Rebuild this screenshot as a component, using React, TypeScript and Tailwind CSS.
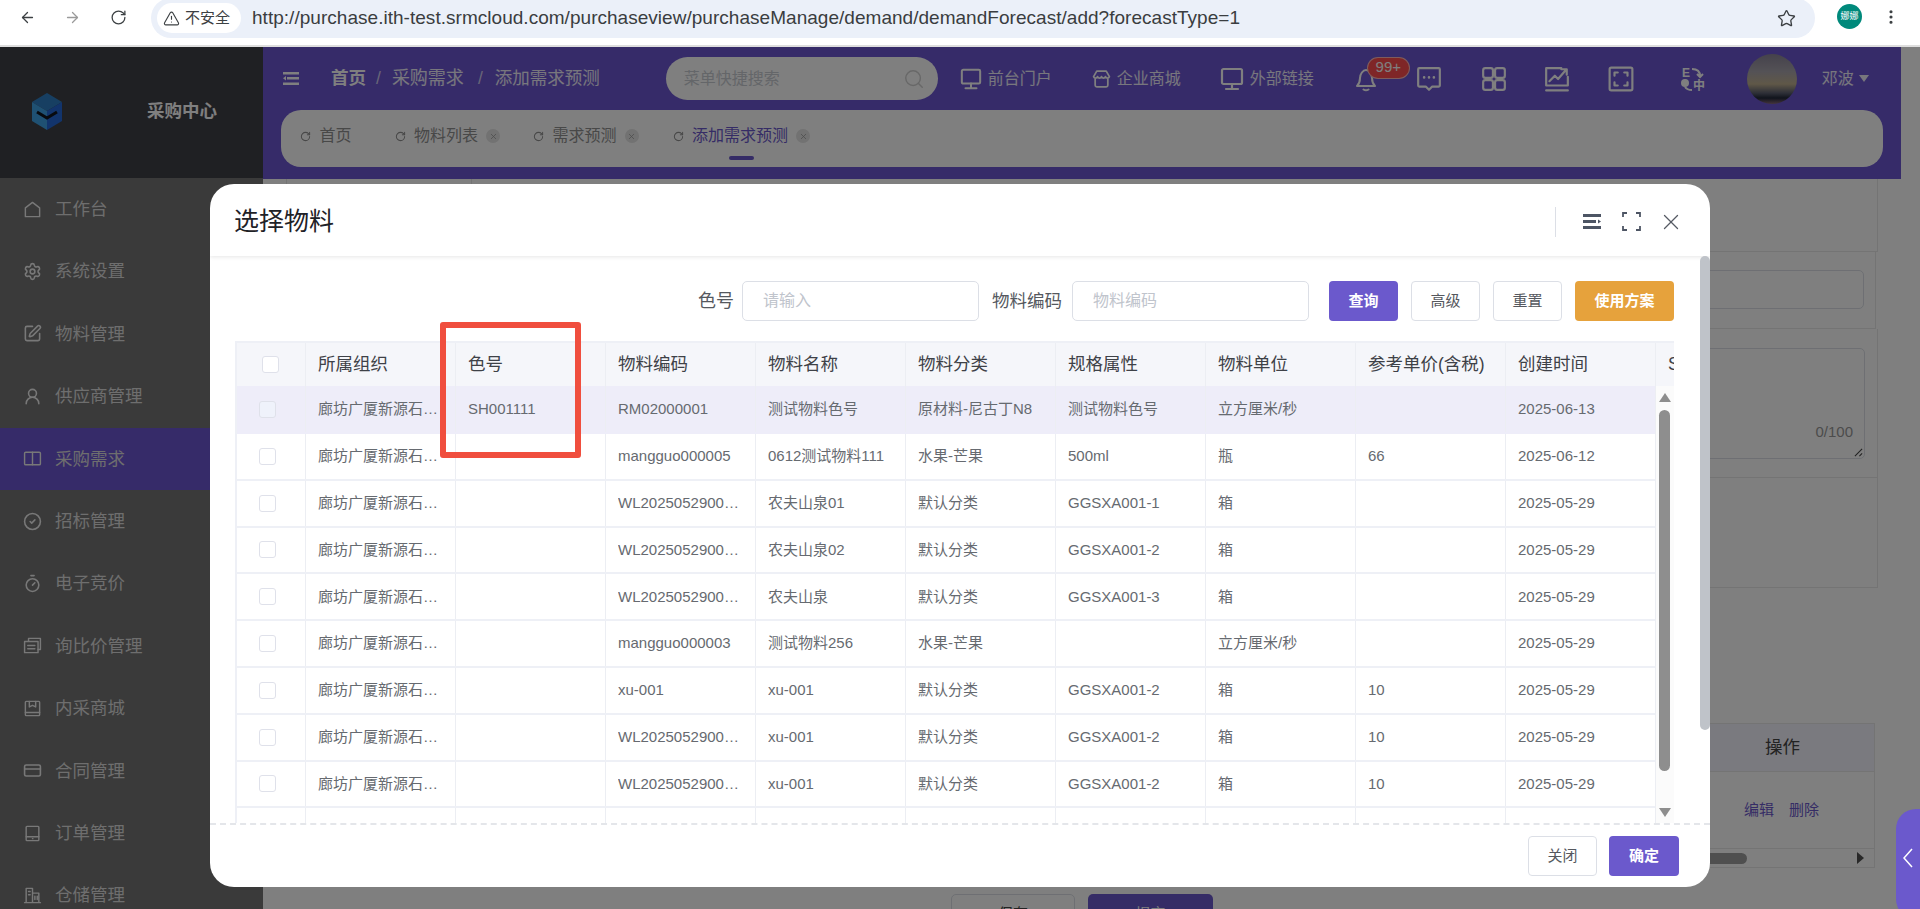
import React from "react";
import {
  ArrowLeft,
  ArrowRight,
  CircleCheck,
  CreditCard,
  EllipsisVertical,
  RotateCw,
  Search,
  Settings,
  SquarePen,
  Star,
  Timer,
  TriangleAlert,
  UserRound,
  X,
} from "lucide-react";

type IconProps = { className?: string };

const Svg = ({ className, children, vb = "0 0 24 24", sw = 1.8 }: IconProps & { children: React.ReactNode; vb?: string; sw?: number }) => (
  <svg viewBox={vb} fill="none" stroke="currentColor" strokeWidth={sw} strokeLinecap="round" strokeLinejoin="round" className={className}>
    {children}
  </svg>
);

const HomeIcon = (p: IconProps) => (
  <Svg {...p}>
    <path d="M3 21V10l9-7 9 7v11z" />
  </Svg>
);
const BookIcon = (p: IconProps) => (
  <Svg {...p}>
    <rect x="2" y="4" width="20" height="16" rx="1.500" />
    <path d="M12 4v16" />
  </Svg>
);
const CardsIcon = (p: IconProps) => (
  <Svg {...p}>
    <path d="M7 6V3h15v14h-3" />
    <rect x="2" y="7" width="17" height="14" />
    <path d="M6 12h9M6 16h9" />
  </Svg>
);
const ShopIcon = (p: IconProps) => (
  <Svg {...p}>
    <rect x="3" y="3" width="18" height="18" rx="1" />
    <path d="M8 3v7l4-2 4 2V3M3 17h18" />
  </Svg>
);
const TabletIcon = (p: IconProps) => (
  <Svg {...p}>
    <rect x="4" y="3" width="16" height="18" rx="1" />
    <path d="M4 16h16" />
    <path d="M12 18.500h.5" />
  </Svg>
);
const StoreIcon = (p: IconProps) => (
  <Svg {...p}>
    <path d="M2 21h20M4 21V3h8v18M12 9h8v12M7 7h2M7 11h2M15 13v4M18 13v4" />
  </Svg>
);
const MonitorIcon = (p: IconProps) => (
  <Svg {...p} sw={2.2}>
    <rect x="2" y="2" width="20" height="15" rx="1.500" />
    <path d="M12 17v5M6 22h12" />
  </Svg>
);
const ShopFrontIcon = (p: IconProps) => (
  <Svg {...p} sw={2.2}>
    <path d="M6 2h12l4 7c-1 2.500-4 2.500-5 0-1 2.500-4 2.500-5 0-1 2.500-4 2.500-5 0-1 2.500-4 2.500-5 0z" />
    <path d="M4 12v8a2 2 0 0 0 2 2h12a2 2 0 0 0 2-2v-8" />
  </Svg>
);
const BellIcon = (p: IconProps) => (
  <Svg {...p} sw={2}>
    <path d="M3 19c2-2 3-4 3-8s3-8 6-8 6 4 6 8 1 6 3 8z" />
    <path d="M9.500 22.500c1.500 1 3.500 1 5 0" />
  </Svg>
);
const MessageIcon = (p: IconProps) => (
  <Svg {...p} sw={2}>
    <path d="M3 2h18a1 1 0 0 1 1 1v15a1 1 0 0 1-1 1h-6l-3 3-3-3H3a1 1 0 0 1-1-1V3a1 1 0 0 1 1-1z" />
    <path d="M7.500 10.500h.01M12 10.500h.01M16.500 10.500h.01" strokeWidth={2.400} />
  </Svg>
);
const GridIcon = (p: IconProps) => (
  <Svg {...p} sw={2}>
    <rect x="2" y="2" width="9" height="9" rx="2" />
    <rect x="13" y="2" width="9" height="9" rx="2" />
    <rect x="2" y="13" width="9" height="9" rx="2" />
    <rect x="13" y="13" width="9" height="9" rx="2" />
  </Svg>
);
const ChartIcon = (p: IconProps) => (
  <Svg {...p} sw={2}>
    <path d="M16 2H2v16h20V10M2 22.500h20" />
    <path d="M5 14l5-5 3 3 7-8M16 3h5v5" />
  </Svg>
);
const FrameIcon = (p: IconProps) => (
  <Svg {...p} sw={2}>
    <rect x="1.500" y="1.500" width="21" height="21" rx="1.500" />
    <path d="M9 6H6v3M15 6h3v3M9 18H6v-3M15 18h3v-3" />
  </Svg>
);
const TranslateIcon = (p: IconProps) => (
  <svg viewBox="0 0 26 26" className={p.className} fill="none" stroke="currentColor" strokeWidth="2">
    <text x="2" y="11" fontSize="12" fontWeight="700" fill="currentColor" stroke="none" fontFamily="Liberation Sans">E</text>
    <text x="13" y="24" fontSize="12" fontWeight="700" fill="currentColor" stroke="none" fontFamily="Noto Sans CJK SC">中</text>
    <path d="M12 3c5 0 8 2 8 7M17 8l3 3 3-3" />
    <circle cx="5" cy="17" r="4" fill="currentColor" stroke="none" />
    <path d="M5 21c2 3 5 3 7 3" />
  </svg>
);
const MenuIcon = (p: IconProps) => (
  <svg viewBox="0 0 16 13" className={p.className} fill="currentColor">
    <rect x="0" y="0" width="16" height="2.500" />
    <rect x="4" y="5" width="12" height="2.500" />
    <rect x="0" y="10.500" width="16" height="2.500" />
    <path d="M0 6.200l3-2.200v4.400z" />
  </svg>
);

const Logo = () => (
  <svg viewBox="0 0 32 37" className="h-[37px] w-[32px]">
    <path d="M16 0l15 9-15 9L1 9z" fill="#2f7fc4" />
    <path d="M1 9l15 9v19L1 28z" fill="#3fa2e6" />
    <path d="M31 9L16 18v19l15-9z" fill="#2468d8" />
    <path d="M6 19l10 6 10-6" fill="none" stroke="#10141c" strokeWidth="3" />
  </svg>
);

const Avatar = () => (
  <svg viewBox="0 0 50 50" className="h-[50px] w-[50px] rounded-full">
    <defs>
      <linearGradient id="sky" x1="0" y1="0" x2="0" y2="1">
        <stop offset="0" stopColor="#8a8498" />
        <stop offset="0.35" stopColor="#a8a4ac" />
        <stop offset="0.6" stopColor="#c0b090" />
        <stop offset="0.78" stopColor="#5c6070" />
        <stop offset="0.88" stopColor="#202838" />
        <stop offset="1" stopColor="#8a6a7a" />
      </linearGradient>
    </defs>
    <rect width="50" height="50" fill="url(#sky)" />
  </svg>
);

const sideItems: { label: string; icon: React.ComponentType<IconProps>; active?: boolean }[] = [
  { label: "工作台", icon: HomeIcon },
  { label: "系统设置", icon: Settings },
  { label: "物料管理", icon: SquarePen },
  { label: "供应商管理", icon: UserRound },
  { label: "采购需求", icon: BookIcon, active: true },
  { label: "招标管理", icon: CircleCheck },
  { label: "电子竞价", icon: Timer },
  { label: "询比价管理", icon: CardsIcon },
  { label: "内采商城", icon: ShopIcon },
  { label: "合同管理", icon: CreditCard },
  { label: "订单管理", icon: TabletIcon },
  { label: "仓储管理", icon: StoreIcon },
];

const columns = ["所属组织", "色号", "物料编码", "物料名称", "物料分类", "规格属性", "物料单位", "参考单价(含税)", "创建时间", "SPU"];

const org = "廊坊广厦新源石材有限公司";
const wl = "WL20250529000001";
const rows = [
  [org, "SH001111", "RM02000001", "测试物料色号", "原材料-尼古丁N8", "测试物料色号", "立方厘米/秒", "", "2025-06-13"],
  [org, "", "mangguo000005", "0612测试物料111", "水果-芒果", "500ml", "瓶", "66", "2025-06-12"],
  [org, "", wl, "农夫山泉01", "默认分类", "GGSXA001-1", "箱", "", "2025-05-29"],
  [org, "", wl, "农夫山泉02", "默认分类", "GGSXA001-2", "箱", "", "2025-05-29"],
  [org, "", wl, "农夫山泉", "默认分类", "GGSXA001-3", "箱", "", "2025-05-29"],
  [org, "", "mangguo000003", "测试物料256", "水果-芒果", "", "立方厘米/秒", "", "2025-05-29"],
  [org, "", "xu-001", "xu-001", "默认分类", "GGSXA001-2", "箱", "10", "2025-05-29"],
  [org, "", wl, "xu-001", "默认分类", "GGSXA001-2", "箱", "10", "2025-05-29"],
  [org, "", wl, "xu-001", "默认分类", "GGSXA001-2", "箱", "10", "2025-05-29"],
  ["", "", "", "", "", "", "", "", ""],
];

const BrowserBar = () => (
  <div className="flex h-[47px] shrink-0 items-start border-b-2 border-[#dedede] bg-white text-[#3c4043]">
    <ArrowLeft className="ml-[19px] mt-[9px] h-[17px] w-[17px]" strokeWidth={1.8} />
    <ArrowRight className="ml-[28px] mt-[9px] h-[17px] w-[17px] text-[#9a9a9a]" strokeWidth={1.8} />
    <RotateCw className="ml-[29px] mt-[9px] h-[17px] w-[17px]" strokeWidth={1.8} />
    <div className="ml-[24px] -mt-[2px] flex h-[40px] w-[1664px] items-center rounded-full bg-[#ebf0f9] pl-[6px] pr-[19px]">
      <div className="flex h-[30px] w-[84px] items-center gap-[5px] rounded-full bg-white pl-[6px] text-[15px]">
        <TriangleAlert className="h-[17px] w-[17px]" strokeWidth={1.6} />
        <span>不安全</span>
      </div>
      <span className="ml-[11px] flex-1 text-[19px] tracking-[0.03px] text-[#3a3d40]">
        http://purchase.ith-test.srmcloud.com/purchaseview/purchaseManage/demand/demandForecast/add?forecastType=1
      </span>
      <Star className="h-[19px] w-[19px]" strokeWidth={1.7} />
    </div>
    <div className="ml-[22px] mt-[4px] flex h-[25px] w-[25px] items-center justify-center rounded-full bg-[#00897b] text-[9px] text-white">娜娜</div>
    <EllipsisVertical className="ml-[20px] mt-[8px] h-[18px] w-[18px]" strokeWidth={2.2} />
  </div>
);

const Sidebar = () => (
  <div className="flex w-[263px] shrink-0 flex-col bg-[#747474]">
    <div className="flex h-[131px] shrink-0 items-center bg-[#3e4046] pb-[2px] pl-[31px]">
      <Logo />
      <span className="ml-[84px] text-[17.500px] font-bold text-[#ffffff]">采购中心</span>
    </div>
    {sideItems.map((item) => {
      const Icon = item.icon;
      return (
        <div key={item.label} className={`flex h-[62.400px] shrink-0 items-center pl-[23px] text-[17.500px] text-[#dcdcdc] ${item.active ? "bg-[#6c56d2]" : ""}`}>
          <Icon className="h-[19px] w-[19px] text-[#f0f0f0]" />
          <span className="ml-[13px]">{item.label}</span>
        </div>
      );
    })}
  </div>
);

const Tab = ({ label, active, closable, className }: { label: string; active?: boolean; closable?: boolean; className?: string }) => (
  <div className={`relative flex h-full items-center pb-[5px] ${className ?? ""}`}>
    <RotateCw className="h-[11px] w-[11px] text-[#909090]" strokeWidth={2.2} />
    <span className={`ml-[8.500px] text-[16px] ${active ? "text-[#6b59cc]" : "text-[#909090]"}`}>{label}</span>
    {closable && (
      <span className="ml-[8px] flex h-[14px] w-[14px] items-center justify-center rounded-full bg-[#e4e4e4]">
        <X className="h-[9px] w-[9px] text-[#999999]" strokeWidth={2} />
      </span>
    )}
    {active && <span className="absolute left-[56px] top-[46px] h-[4px] w-[25px] rounded-full bg-[#6b59cc]" />}
  </div>
);

const HeaderLink = ({ icon: Icon, label, size, className }: { icon: React.ComponentType<IconProps>; label: string; size: string; className?: string }) => (
  <div className={`flex items-center gap-[6px] text-[16px] text-white/90 ${className ?? ""}`}>
    <Icon className={`${size} text-white`} />
    <span>{label}</span>
  </div>
);

const TopHeader = () => (
  <div className="flex h-[132px] shrink-0 flex-col bg-[#6c56d2]">
    <div className="flex h-[63px] shrink-0 items-center pl-[20px] text-white">
      <MenuIcon className="h-[13px] w-[16px]" />
      <span className="ml-[32px] text-[17.500px] font-bold">首页</span>
      <span className="ml-[10px] text-[17.500px] text-white/70">/</span>
      <span className="ml-[11px] text-[18px] text-white/90">采购需求</span>
      <span className="ml-[14px] text-[17.500px] text-white/70">/</span>
      <span className="ml-[12px] text-[17.500px] text-white/90">添加需求预测</span>
      <div className="ml-[66px] flex h-[43px] w-[272px] shrink-0 items-center justify-between rounded-full bg-white pl-[18px] pr-[13px] text-[16px] text-[#c8ccd2]">
        <span>菜单快捷搜索</span>
        <Search className="h-[22px] w-[22px] text-[#d0d0d0]" strokeWidth={1.6} />
      </div>
      <HeaderLink icon={MonitorIcon} label="前台门户" size="h-[22px] w-[22px]" className="ml-[22px]" />
      <HeaderLink icon={ShopFrontIcon} label="企业商城" size="h-[22px] w-[19px]" className="ml-[40px]" />
      <HeaderLink icon={MonitorIcon} label="外部链接" size="h-[24px] w-[24px]" className="ml-[39px]" />
      <div className="relative ml-[40px] h-[26px] w-[24px]">
        <BellIcon className="h-[26px] w-[24px]" />
        <span className="absolute -top-[9px] left-[13px] flex h-[22px] w-[43px] items-center justify-center rounded-full border border-white/60 bg-[#ff4d4f] text-[15px]">99+</span>
      </div>
      <MessageIcon className="ml-[38px] h-[26px] w-[26px]" />
      <GridIcon className="ml-[39px] h-[26px] w-[26px]" />
      <ChartIcon className="ml-[37px] h-[26px] w-[26px]" />
      <FrameIcon className="ml-[38px] h-[26px] w-[26px]" />
      <TranslateIcon className="ml-[46px] h-[26px] w-[26px]" />
      <div className="ml-[41px] shrink-0">
        <Avatar />
      </div>
      <span className="ml-[25px] text-[16px] text-white/90">邓波</span>
      <span className="ml-[5px] h-0 w-0 border-x-[5px] border-t-[7px] border-x-transparent border-t-white/90" />
    </div>
    <div className="mx-[18px] flex h-[57px] shrink-0 items-center rounded-[20px] bg-white pl-[19px]">
      <Tab label="首页" className="mr-[10px]" />
      <Tab label="物料列表" closable className="ml-[33px]" />
      <Tab label="需求预测" closable className="ml-[33px]" />
      <Tab label="添加需求预测" closable active className="ml-[34px]" />
    </div>
  </div>
);

const FormRow = ({ h, w, children }: { h: string; w: string; children?: React.ReactNode }) => (
  <div className={`flex ${h} ${w} shrink-0 border-b border-r border-l border-[#e8e8e8]`}>
    <div className="w-[185px] shrink-0 border-r border-[#e8e8e8]" />
    <div className="relative flex-1">{children}</div>
  </div>
);

const PageBehind = () => (
  <div className="flex-1 pl-[23px]">
    <FormRow h="h-[73px]" w="w-[1592px]" />
    <FormRow h="h-[77px]" w="w-[1590px]">
      <div className="ml-[20px] mr-[11px] mt-[18px] h-[39px] rounded-[5px] border border-[#dcdfe6]" />
    </FormRow>
    <FormRow h="h-[149px]" w="w-[1592px]">
      <div className="relative ml-[20px] mr-[12px] mt-[19px] h-[111px] rounded-[5px] border border-[#dcdfe6]">
        <span className="absolute bottom-[15px] right-[11px] text-[15px] text-[#999999]">0/100</span>
        <svg viewBox="0 0 10 10" className="absolute bottom-[1px] right-[1px] h-[9px] w-[9px]" stroke="#444444" strokeWidth="1.200">
          <path d="M1 9l8-8M6 9l3-3" />
        </svg>
      </div>
    </FormRow>
    <FormRow h="h-[110px]" w="w-[1592px]" />
    <div className="mt-[135px] flex h-[145px] w-[1589px] flex-col border border-[#e8e8e8]">
      <div className="flex h-[47px] shrink-0 items-center justify-end bg-[#f4f4fe]">
        <span className="w-[165px] pl-[56px] text-[17.500px] text-[#444444]">操作</span>
      </div>
      <div className="flex h-[78px] shrink-0 items-center justify-end border-y border-[#e8e8e8] pr-[55px] text-[15px] text-[#6b59cc]">
        <span>编辑</span>
        <span className="ml-[15px]">删除</span>
      </div>
      <div className="flex flex-1 items-center pl-[1380px]">
        <span className="h-[11px] w-[80px] rounded-full bg-[#9e9e9e]" />
        <span className="ml-[110px] h-0 w-0 border-y-[6px] border-l-[7px] border-y-transparent border-l-[#505050]" />
      </div>
    </div>
    <div className="mt-[26px] flex gap-[13px] pl-[665px] text-[15px]">
      <div className="flex h-[40px] w-[124px] items-center justify-center rounded-[5px] border border-[#dcdfe6] bg-white text-[#444444]">保存</div>
      <div className="flex h-[40px] w-[125px] items-center justify-center rounded-[5px] bg-[#6b59cc] text-white">提交</div>
    </div>
  </div>
);

const Btn = ({ children, className }: { children: React.ReactNode; className?: string }) => (
  <button className={`h-[40px] rounded-[4px] text-[15px] ${className ?? ""}`}>{children}</button>
);

const MaterialTable = () => (
  <div className="relative mt-[20px] h-[482px] overflow-hidden border-l-2 border-t-2 border-[#eef0f6]">
    <div className="flex h-[43px] w-[1600px] bg-[#f5f6fa] text-[17.500px] text-[#3e4147]">
      <div className="flex w-[68px] shrink-0 items-center pl-[25px]">
        <span className="h-[17px] w-[17px] rounded-[3px] border border-[#dfe1ea] bg-white" />
      </div>
      {columns.map((c) => (
        <div key={c} className="flex w-[150px] shrink-0 items-center whitespace-nowrap border-l border-[#eceef3] pl-[12px]">
          {c}
        </div>
      ))}
    </div>
    {rows.map((r, i) => (
      <div key={i} className={`flex w-[1600px] border-b-2 text-[15px] text-[#666a70] ${i === 0 ? "h-[48px] border-[#eeedf9] bg-[#eeedf9]" : "h-[46.800px] border-[#eef0f6]"}`}>
        <div className="flex w-[68px] shrink-0 items-center pl-[22px]">
          {r[0] && <span className={`h-[17px] w-[17px] rounded-[3px] border border-[#dfe1ea] ${i === 0 ? "bg-[#eff2fb]" : "bg-white"}`} />}
        </div>
        {r.map((v, j) => (
          <div key={j} className="flex w-[150px] shrink-0 items-center border-l border-[#eceef3] pl-[12px] pr-[13px]">
            <span className="truncate">{v}</span>
          </div>
        ))}
      </div>
    ))}
    <div className="absolute bottom-0 right-0 top-[43px] flex w-[19.500px] flex-col items-center border-l border-[#eceef3] bg-[#fbfbfb]">
      <span className="mt-[7px] h-0 w-0 border-x-[6px] border-b-[9px] border-x-transparent border-b-[#8e8e8e]" />
      <span className="mt-[8px] h-[361px] w-[11px] rounded-full bg-[#8e8e8e]" />
      <span className="mt-[37px] h-0 w-0 border-x-[6px] border-t-[9px] border-x-transparent border-t-[#8e8e8e]" />
    </div>
  </div>
);

const Modal = () => (
  <div className="absolute left-[210px] top-[184px] z-20 flex h-[703px] w-[1500px] flex-col overflow-hidden rounded-[24px] bg-white">
    <div className="flex h-[72px] shrink-0 items-center pl-[24px] pr-[26px] pt-[3px] shadow-[0_1px_4px_rgba(0,0,0,0.1)]">
      <span className="flex-1 text-[25px] text-[#1f2227]">选择物料</span>
      <span className="h-[30px] w-px bg-[#dcdfe6]" />
      <svg viewBox="0 0 18 15" className="ml-[27px] h-[15px] w-[18px]" fill="#4d5564">
        <rect width="18" height="3" />
        <rect y="6" width="13" height="3" />
        <rect y="12" width="18" height="3" />
        <path d="M15 5.500l3 2-3 2z" />
      </svg>
      <svg viewBox="0 0 19 19" className="ml-[21px] h-[19px] w-[19px]" fill="none" stroke="#4d5564" strokeWidth="1.800">
        <path d="M5 1H1v4M14 1h4v4M5 18H1v-4M14 18h4v-4" />
      </svg>
      <X className="ml-[17px] h-[26px] w-[26px] text-[#555a63]" strokeWidth={1.200} />
    </div>
    <div className="relative h-[567px] shrink-0 pl-[25px] pr-[36px] pt-[25px]">
      <div className="flex h-[40px] items-center justify-end text-[17.500px] text-[#55585e]">
        <span className="text-[18px]">色号</span>
        <input placeholder="请输入" className="ml-[8px] h-[40px] w-[237px] rounded-[5px] border border-[#dcdfe6] pl-[20px] text-[16px] outline-none placeholder:text-[#c0c4cc]" />
        <span className="ml-[13px]">物料编码</span>
        <input placeholder="物料编码" className="ml-[10px] h-[40px] w-[237px] rounded-[5px] border border-[#dcdfe6] pl-[20px] text-[16px] outline-none placeholder:text-[#c0c4cc]" />
        <Btn className="ml-[20px] w-[69px] bg-[#6b59cc] font-semibold text-white">查询</Btn>
        <Btn className="ml-[13px] w-[69px] border border-[#dcdfe6] text-[#55585e]">高级</Btn>
        <Btn className="ml-[13px] w-[69px] border border-[#dcdfe6] text-[#55585e]">重置</Btn>
        <Btn className="ml-[13px] w-[99px] bg-[#e6a23c] font-semibold text-white">使用方案</Btn>
      </div>
      <MaterialTable />
      <span className="absolute right-0 top-0 h-[474px] w-[10.500px] rounded-full bg-[#bfc3c9]" />
    </div>
    <div className="flex flex-1 items-center justify-end gap-[12px] border-t-2 border-dashed border-[#e4e6ea] pr-[31px] text-[15px]">
      <Btn className="w-[69px] border border-[#dcdfe6] text-[#55585e]">关闭</Btn>
      <Btn className="w-[70px] bg-[#6b59cc] font-semibold text-white">确定</Btn>
    </div>
  </div>
);

export default function App() {
  return (
    <div className="relative flex h-[909px] w-[1920px] flex-col overflow-hidden bg-white font-['Liberation_Sans','Noto_Sans_CJK_SC',sans-serif]">
      <BrowserBar />
      <div className="relative flex flex-1 overflow-hidden">
        <Sidebar />
        <div className="flex w-[1638px] flex-col">
          <TopHeader />
          <PageBehind />
        </div>
        <div className="absolute inset-0 bg-black/50" />
      </div>
      <Modal />
      <div className="absolute left-[439.500px] top-[322px] z-30 h-[136px] w-[141px] rounded-[3px] border-[6px] border-[#f04e3e]" />
      <div className="absolute -bottom-[10px] right-0 z-30 flex h-[110px] w-[24px] items-start justify-start rounded-l-[20px] bg-[#6b59cc] pl-[7px] pt-[39px]">
        <svg viewBox="0 0 10 20" className="h-[20px] w-[10px]" fill="none" stroke="#ffffff" strokeWidth="1.500">
          <path d="M9 1L1 10l8 9" />
        </svg>
      </div>
    </div>
  );
}
